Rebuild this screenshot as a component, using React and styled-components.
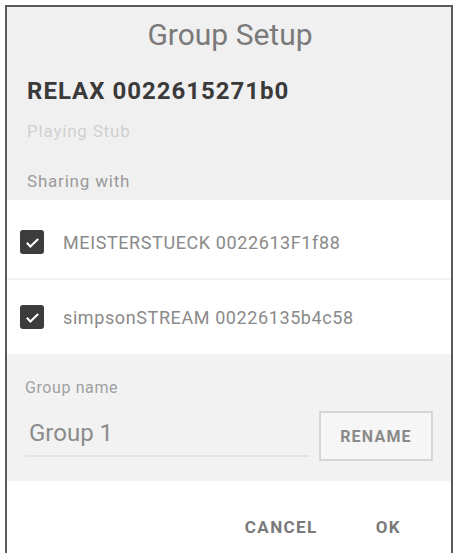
import styled, { createGlobalStyle } from 'styled-components';

const GlobalStyle = createGlobalStyle`
  html, body {
    margin: 0;
    padding: 0;
    background: #ffffff;
    font-family: Roboto, "Liberation Sans", sans-serif;
  }
`;

const Frame = styled.div`
  box-sizing: border-box;
  margin: 5px 3px 0 5px;
  height: 548px;
  border: 2px solid #5a5a5a;
  border-bottom: none;
  display: flex;
  flex-direction: column;
  overflow: hidden;
`;

const Header = styled.div`
  background: #f0f0f0;
  height: 193px;
  padding: 0 18px 0 20px;
  display: flex;
  flex-direction: column;
`;

const Title = styled.h1`
  margin: 0;
  height: 56px;
  line-height: 56px;
  text-align: center;
  font-weight: 400;
  font-size: 30px;
  color: #7a7a7a;
`;

const DeviceName = styled.div`
  margin-top: 14px;
  font-size: 24px;
  font-weight: 700;
  color: #3a3a3a;
  letter-spacing: 1px;
`;

const Status = styled.div`
  margin-top: 16px;
  font-size: 17px;
  color: #d0d0d0;
  letter-spacing: 0.8px;
`;

const SectionLabel = styled.div`
  margin-top: 30px;
  font-size: 17px;
  color: #9a9a9a;
  letter-spacing: 0.8px;
`;

const List = styled.div`
  background: #ffffff;
  height: 154px;
  display: flex;
  flex-direction: column;
`;

const Row = styled.label`
  display: flex;
  align-items: center;
  gap: 19px;
  padding: ${({ first }) => (first ? '6px' : '0')} 13px 0;
  height: ${({ first }) => (first ? '80px' : 'auto')};
  flex: ${({ first }) => (first ? 'none' : '1')};
  box-sizing: border-box;
  border-bottom: ${({ first }) => (first ? '2px solid #f2f2f2' : 'none')};
`;

const Box = styled.span`
  width: 24px;
  height: 24px;
  border-radius: 3px;
  background: #3c3c3c;
  display: flex;
  align-items: center;
  justify-content: center;
  flex-shrink: 0;
`;

const RowText = styled.span`
  font-size: 18px;
  color: #8a8a8a;
  letter-spacing: 0.6px;
`;

const NameSection = styled.div`
  background: #f2f2f2;
  height: 127px;
  padding: 24px 18px 0;
  box-sizing: border-box;
`;

const NameLabel = styled.div`
  font-size: 16px;
  color: #a0a0a0;
  letter-spacing: 0.6px;
`;

const NameRow = styled.div`
  display: flex;
  align-items: flex-end;
  gap: 10px;
  margin-top: 14px;
`;

const NameInput = styled.div`
  flex: 1;
  height: 44px;
  line-height: 44px;
  padding-left: 4px;
  font-size: 24px;
  color: #8c8c8c;
  border-bottom: 2px solid #e4e4e4;
  margin-bottom: 4px;
`;

const OutlineButton = styled.button`
  width: 114px;
  height: 50px;
  border: 2px solid #d6d6d6;
  background: #f6f6f6;
  font-family: inherit;
  font-size: 16px;
  font-weight: 700;
  color: #8a8a8a;
  letter-spacing: 1.2px;
`;

const Footer = styled.div`
  flex: 1;
  background: #ffffff;
  display: flex;
  justify-content: flex-end;
  align-items: center;
  padding: 20px 46px 0 0;
  gap: 50px;
`;

const TextButton = styled.button`
  border: none;
  background: none;
  padding: 8px 4px;
  font-family: inherit;
  font-size: 17px;
  font-weight: 700;
  color: #7a7a7a;
  letter-spacing: 1.4px;
`;

const Check = () => (
  <Box>
    <svg width="17" height="17" viewBox="0 0 24 24">
      <path d="M4 12.5l5 5L20 7" fill="none" stroke="#ffffff" strokeWidth="3" />
    </svg>
  </Box>
);

const members = ['MEISTERSTUECK 0022613F1f88', 'simpsonSTREAM 00226135b4c58'];

export default function App() {
  return (
    <>
      <GlobalStyle />
      <Frame>
        <Header>
          <Title>Group Setup</Title>
          <DeviceName>RELAX 0022615271b0</DeviceName>
          <Status>Playing Stub</Status>
          <SectionLabel>Sharing with</SectionLabel>
        </Header>
        <List>
          {members.map((m, i) => (
            <Row key={m} first={i === 0}>
              <Check />
              <RowText>{m}</RowText>
            </Row>
          ))}
        </List>
        <NameSection>
          <NameLabel>Group name</NameLabel>
          <NameRow>
            <NameInput>Group 1</NameInput>
            <OutlineButton>RENAME</OutlineButton>
          </NameRow>
        </NameSection>
        <Footer>
          <TextButton>CANCEL</TextButton>
          <TextButton>OK</TextButton>
        </Footer>
      </Frame>
    </>
  );
}
